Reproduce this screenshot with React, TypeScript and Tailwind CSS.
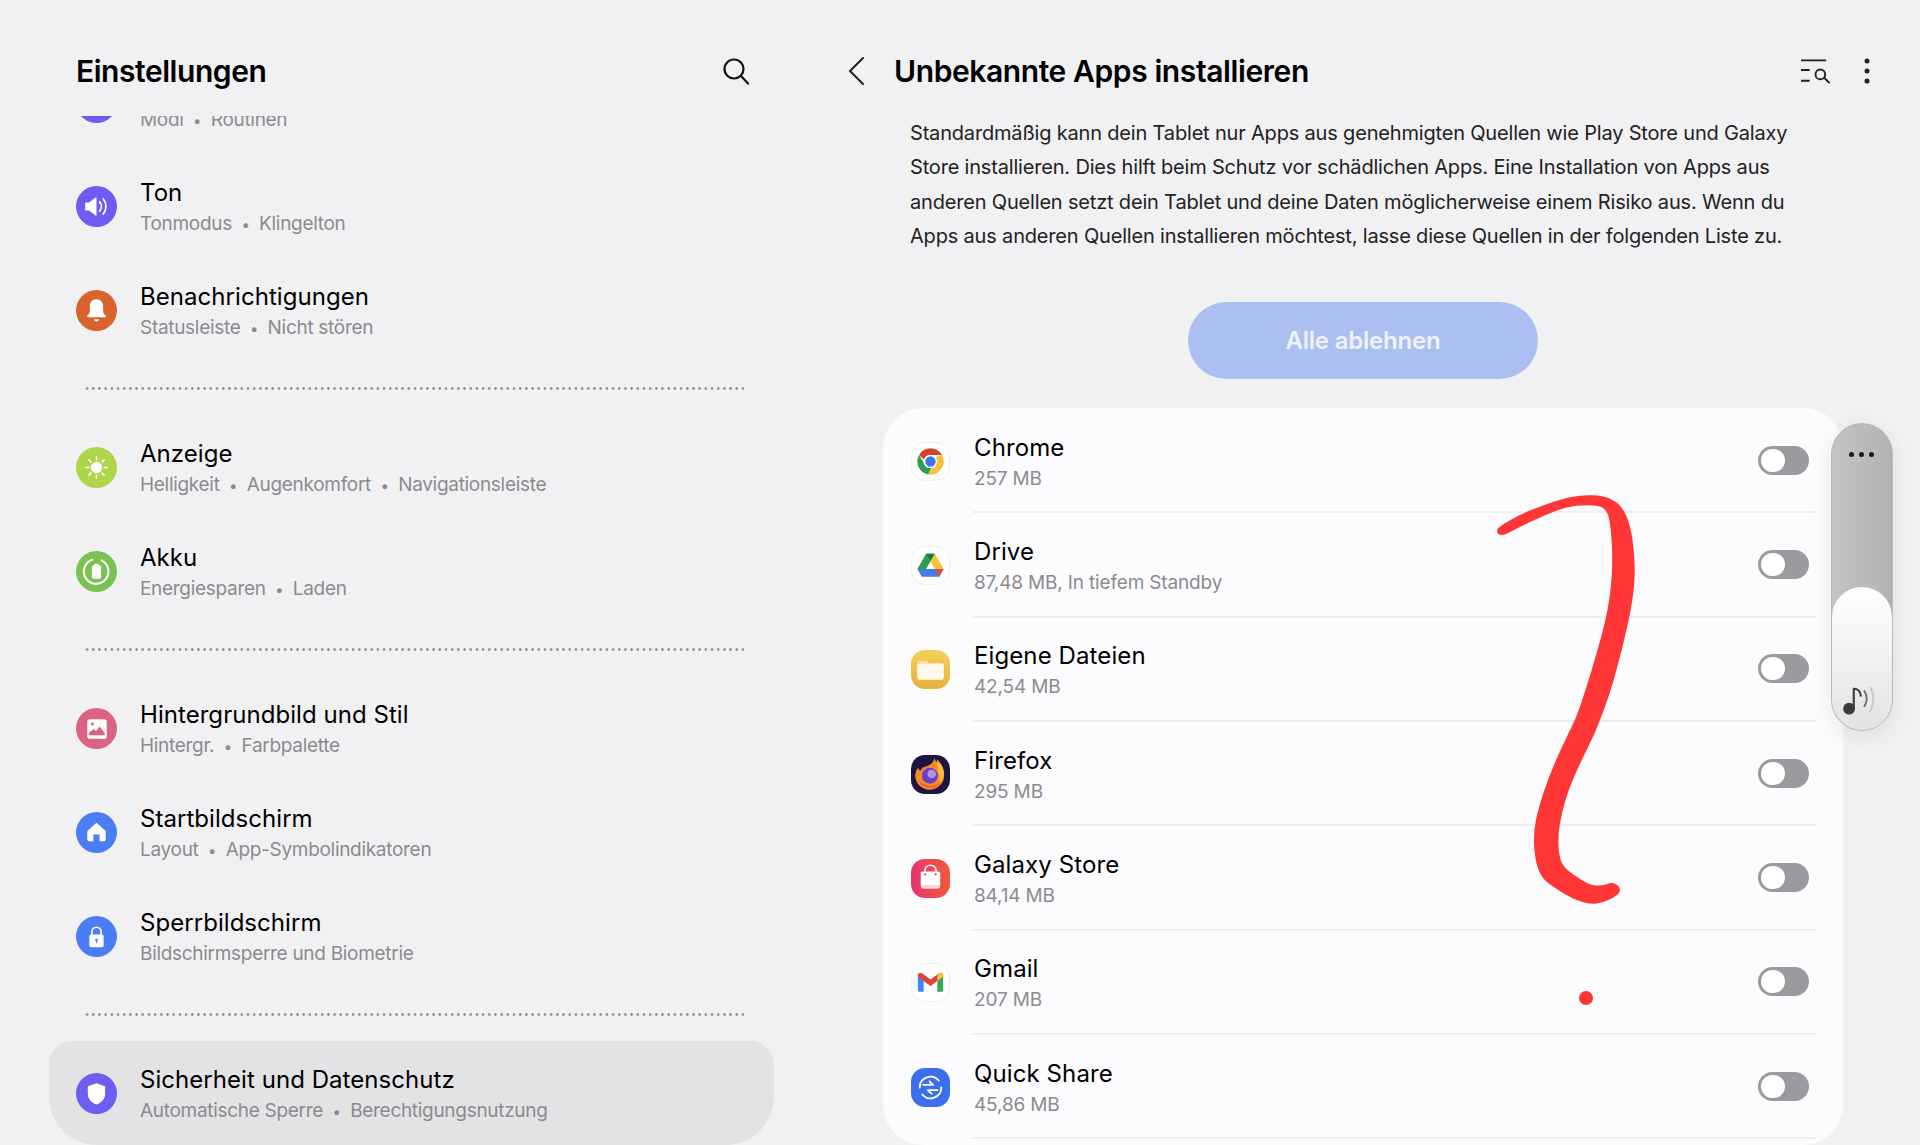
import React from 'react';

const font = { fontFamily: 'Inter, "Noto Sans", sans-serif' };

const scribblePoints: [number, number][] = [
  [50, 153], [55, 143], [90, 120], [150, 90], [250, 55], [300, 47], [350, 45], [395, 55], [430, 85], [452, 140],
  [463, 220], [465, 290], [458, 360], [440, 450], [415, 550], [390, 640], [360, 720], [340, 770], [300, 850],
  [265, 930], [245, 1000], [235, 1060], [235, 1110], [245, 1155], [280, 1185], [330, 1215], [365, 1218], [395, 1207],
  [415, 1215], [422, 1232], [410, 1248], [370, 1268], [330, 1273], [280, 1258], [230, 1228], [185, 1195], [165, 1140],
  [160, 1060], [175, 985], [210, 880], [260, 770], [290, 710], [320, 620], [350, 520], [375, 430], [392, 340],
  [398, 240], [393, 150], [385, 100], [365, 78], [320, 75], [260, 80], [190, 107], [120, 140], [75, 165], [55, 165],
];

const smoothPath = (pts: [number, number][]) => {
  const mid = (a: [number, number], b: [number, number]) => `${(a[0] + b[0]) / 2} ${(a[1] + b[1]) / 2}`;
  let d = `M${mid(pts[pts.length - 1], pts[0])}`;
  pts.forEach((p, i) => {
    d += ` Q${p[0]} ${p[1]} ${mid(p, pts[(i + 1) % pts.length])}`;
  });
  return d + 'Z';
};

const SpeakerGlyph = () => (
  <svg viewBox="0 0 40 40" className="w-full h-full">
    <path d="M9.5 16.5h3.5l6.5-5v17l-6.5-5H9.5z" fill="#fff" stroke="#fff" strokeWidth="1" strokeLinejoin="round" />
    <path d="M23 15.5c2.2 2.6 2.2 6.4 0 9M26.5 12.5c3.6 4.4 3.6 10.6 0 15" fill="none" stroke="#fff" strokeWidth="1.7" strokeLinecap="round" />
  </svg>
);

const BellGlyph = () => (
  <svg viewBox="0 0 40 40" className="w-full h-full">
    <path d="M20 9c-4.4 0-6.5 3.4-6.5 7v4.5c0 2-1 3.2-2.5 4.500v1.500h18V25c-1.500-1.300-2.500-2.500-2.500-4.500V16c0-3.600-2.100-7-6.500-7z" fill="#fff" />
    <path d="M17.500 28.500h5c-.4 1.500-1.300 2.200-2.500 2.200s-2.100-.7-2.500-2.200z" fill="#fff" />
  </svg>
);

const SunGlyph = () => (
  <svg viewBox="0 0 40 40" className="w-full h-full">
    <circle cx="20" cy="20" r="5.500" fill="#fff" />
    <path d="M20 9.500v3M20 27.500v3M9.500 20h3M27.500 20h3M12.600 12.600l2 2M25.400 25.400l2 2M27.400 12.600l-2 2M14.600 25.400l-2 2" stroke="#fff" strokeWidth="1.500" strokeLinecap="round" />
  </svg>
);

const BatteryGlyph = () => (
  <svg viewBox="0 0 40 40" className="w-full h-full">
    <path d="M16 8.500A12 12 0 1 0 25 9.200" fill="none" stroke="#fff" strokeWidth="2" strokeLinecap="round" />
    <path d="M18 12.500h4v1.500h1c.8 0 1.500.7 1.500 1.500v10c0 .8-.7 1.500-1.500 1.500h-6c-.8 0-1.500-.7-1.500-1.500v-10c0-.8.7-1.500 1.500-1.500h1z" fill="#fff" />
  </svg>
);

const PictureGlyph = () => (
  <svg viewBox="0 0 40 40" className="w-full h-full">
    <rect x="11" y="11" width="19" height="19" rx="2.500" fill="#fff" />
    <circle cx="16" cy="15.500" r="1.500" fill="#dc6283" />
    <path d="M12.500 26.500v-2l4.500-4 2.500 2 3.500-4.500 5 6.500v2z" fill="#dc6283" />
  </svg>
);

const HomeGlyph = () => (
  <svg viewBox="0 0 40 40" className="w-full h-full">
    <path d="M20 10.500l-8.500 7.500c-.4.400-.5.800-.5 1.300v7.200c0 1.100.9 2 2 2h4v-6.500h6V28.500h4c1.100 0 2-.9 2-2v-7.200c0-.5-.1-.9-.5-1.300z" fill="#fff" />
  </svg>
);

const LockGlyph = () => (
  <svg viewBox="0 0 40 40" className="w-full h-full">
    <path d="M15.500 19v-3.500a4.500 4.500 0 0 1 9 0V19" fill="none" stroke="#fff" strokeWidth="1.600" />
    <rect x="13" y="18" width="14" height="12.500" rx="2" fill="#fff" />
    <circle cx="20" cy="23.500" r="1.300" fill="#4b7ef5" />
    <rect x="19.400" y="23.500" width="1.200" height="3" fill="#4b7ef5" />
  </svg>
);

const ShieldGlyph = () => (
  <svg viewBox="0 0 40 40" className="w-full h-full">
    <path d="M20 10.500l8 2.800v7c0 4.800-3 8-8 10-5-2-8-5.200-8-10v-7z" fill="#fff" stroke="#fff" strokeLinejoin="round" />
  </svg>
);

const ChromeIcon = () => (
  <svg viewBox="0 0 38 38" className="w-full h-full">
    <path d="M19 5.500a13.500 13.500 0 0 1 11.700 6.750H19a6.750 6.750 0 0 0-6.500 5L7.300 12.250A13.500 13.500 0 0 1 19 5.500z" fill="#d5412f" />
    <path d="M7.300 12.250l5.800 10.100a6.750 6.750 0 0 0 6.900 3.300l-3.300 6.700A13.500 13.500 0 0 1 7.300 12.250z" fill="#2f9e4f" />
    <path d="M30.700 12.250A13.500 13.500 0 0 1 19 32.500l-2.200-.2 5.800-10a6.750 6.750 0 0 0-.1-7.050z" fill="#f6c13d" />
    <circle cx="19" cy="19" r="6.800" fill="#fff" />
    <circle cx="19" cy="19" r="5.300" fill="#3b78e7" />
  </svg>
);

const DriveIcon = () => (
  <svg viewBox="0 0 38 38" className="w-full h-full">
    <path d="M14.500 7h9l-9 15.500H5.500z" fill="#2f9e4f" />
    <path d="M14.500 7l4.500 7.700L23.500 7z" fill="#1d7a3c" />
    <path d="M23.500 7l9 15.500h-9L19 14.700z" fill="#f6c13d" />
    <path d="M5.500 22.500h27l-4.500 8H10z" fill="#3f7ee8" />
    <path d="M32.500 22.500h-9l4.500 8z" fill="#d9503f" />
  </svg>
);

const FilesIcon = () => (
  <svg viewBox="0 0 38 38" className="w-full h-full">
    <path d="M6 13c0-1.500 1-2.500 2.500-2.500H15l2.500 2.500h12.500c1.300 0 2 1 2 2v2H6z" fill="#f8e39a" />
    <rect x="6" y="13.500" width="26" height="15.500" rx="3" fill="#fdf8ea" />
  </svg>
);

const FirefoxIcon = () => (
  <svg viewBox="3 3 32 32" className="w-full h-full">
    <path d="M22 5.500c1 3 3.500 4 5 6.500 1.500 1.500 2.500 2.500 3 5.500 1.500 7.500-4.500 14-11.500 14C11.500 31.500 6.500 26 6.500 20c0-3 1-5 2.500-6.500.2 1.300.8 2 1.800 2.500 1-2.500 3-3.500 5-3.800 3-1 6-3 6.200-6.700z" fill="#f58a2c" />
    <path d="M24 6.500c3 3 6 6 6 11.500 0 4-2 7-4.500 8 1.500-3 1.500-6.500-.5-9.500-.5-3.500 0-7 -1-10z" fill="#fbbd3a" />
    <circle cx="18.500" cy="20" r="6.500" fill="#6a3fc7" />
    <circle cx="20" cy="18.500" r="3.500" fill="#f4d9ef" opacity=".55" />
    <path d="M9 23c2 5 6 7 10 7 4.500 0 7.500-2 9-5-3 3-7 4-11 3-3-.5-6-2.500-8-5z" fill="#f25c3f" />
  </svg>
);

const StoreIcon = () => (
  <svg viewBox="0 0 38 38" className="w-full h-full">
    <path d="M13.500 12.500v-1a5.500 5.500 0 0 1 11 0v1" fill="none" stroke="#fff" strokeWidth="1.500" />
    <path d="M9.500 14c0-1 .7-1.800 1.800-1.800h15.400c1.100 0 1.800.8 1.800 1.800v12H9.500z" fill="#fff" />
    <path d="M9.500 25.500h19c0 2-1 3.500-3 3.500H12.500c-2 0-3-1.500-3-3.500z" fill="#fbd5cf" />
    <circle cx="14" cy="15" r="1" fill="#e8386f" />
    <circle cx="24" cy="15" r="1" fill="#e8386f" />
  </svg>
);

const GmailIcon = () => (
  <svg viewBox="0 0 38 38" className="w-full h-full">
    <path d="M6 12.500V27a1.500 1.500 0 0 0 1.500 1.500H12V17z" fill="#4285f4" />
    <path d="M32 12.500V27a1.500 1.500 0 0 1-1.500 1.500H26V17z" fill="#34a853" />
    <path d="M6 11.500c0-2.200 2.600-3.300 4.300-2L19 16l8.700-6.500c1.700-1.300 4.300-.2 4.300 2V13l-6 4.500-7 5.200-7-5.200L6 13z" fill="#d9453a" />
    <path d="M26 10.500l1.700-1c1.700-1.300 4.300-.2 4.300 2V13l-6 4.500z" fill="#f6c13d" />
  </svg>
);

const QuickShareIcon = () => (
  <svg viewBox="0 0 38 38" className="w-full h-full">
    <path d="M8.500 19a10.500 10.500 0 0 1 18.500-6.800M29.500 19a10.500 10.500 0 0 1-18.500 6.800" fill="none" stroke="#fff" strokeWidth="1.800" strokeLinecap="round" />
    <path d="M12 16.500h9.500M18 13l3.500 3.500M26 21.500h-9.500M20 25l-3.500-3.500" fill="none" stroke="#fff" strokeWidth="1.800" strokeLinecap="round" />
  </svg>
);

const settingsGroups = [
  [
    { title: 'Ton', sub: ['Tonmodus', 'Klingelton'], color: 'bg-[#6c5cf0]', glyph: <SpeakerGlyph /> },
    { title: 'Benachrichtigungen', sub: ['Statusleiste', 'Nicht stören'], color: 'bg-[#d8632c]', glyph: <BellGlyph /> },
  ],
  [
    { title: 'Anzeige', sub: ['Helligkeit', 'Augenkomfort', 'Navigationsleiste'], color: 'bg-[#aed64a]', glyph: <SunGlyph /> },
    { title: 'Akku', sub: ['Energiesparen', 'Laden'], color: 'bg-[#7ac252]', glyph: <BatteryGlyph /> },
  ],
  [
    { title: 'Hintergrundbild und Stil', sub: ['Hintergr.', 'Farbpalette'], color: 'bg-[#dc6283]', glyph: <PictureGlyph /> },
    { title: 'Startbildschirm', sub: ['Layout', 'App-Symbolindikatoren'], color: 'bg-[#4b7ef5]', glyph: <HomeGlyph /> },
    { title: 'Sperrbildschirm', sub: ['Bildschirmsperre und Biometrie'], color: 'bg-[#4b7ef5]', glyph: <LockGlyph /> },
  ],
];

const apps = [
  { name: 'Chrome', size: '257 MB', tile: 'bg-white border border-[#efeff2]', icon: <ChromeIcon /> },
  { name: 'Drive', size: '87,48 MB, In tiefem Standby', tile: 'bg-white border border-[#efeff2]', icon: <DriveIcon /> },
  { name: 'Eigene Dateien', size: '42,54 MB', tile: 'bg-gradient-to-b from-[#f5cf5a] to-[#e9b03c]', icon: <FilesIcon /> },
  { name: 'Firefox', size: '295 MB', tile: 'bg-[#1d1440]', icon: <FirefoxIcon /> },
  { name: 'Galaxy Store', size: '84,14 MB', tile: 'bg-gradient-to-r from-[#e6306f] to-[#f05a35]', icon: <StoreIcon /> },
  { name: 'Gmail', size: '207 MB', tile: 'bg-white border border-[#efeff2]', icon: <GmailIcon /> },
  { name: 'Quick Share', size: '45,86 MB', tile: 'bg-[#3a6ff0]', icon: <QuickShareIcon /> },
];

const Subline = ({ parts }: { parts: string[] }) => (
  <p className="mt-[1px] text-[19px] tracking-[-0.3px] leading-[30px] text-[#8b8b8f] whitespace-nowrap">
    {parts.map((part, i) => (
      <span key={part}>
        {i > 0 && <span className="mx-[9.5px] text-[15px]">•</span>}
        {part}
      </span>
    ))}
  </p>
);

const SettingsRow = ({ title, sub, color, glyph, active }: { title: string; sub: string[]; color: string; glyph: React.ReactNode; active?: boolean }) => (
  <div className={`ml-[49px] w-[725px] h-[104px] flex-shrink-0 pl-[27px] flex items-center gap-[23px] ${active ? 'bg-[#e3e3e6] rounded-t-[24px] rounded-b-[48px]' : ''}`}>
    <div className={`w-[41px] h-[41px] rounded-full flex-shrink-0 ${color}`}>{glyph}</div>
    <div className="pt-[5px]">
      <p className="text-[24px] tracking-[0.05px] leading-[30px] text-black whitespace-nowrap">{title}</p>
      <Subline parts={sub} />
    </div>
  </div>
);

const DottedLine = () => (
  <div className="h-[53px] flex-shrink-0 flex items-center pl-[84px]">
    <div className="w-[660px] h-[3px] bg-[radial-gradient(circle,#8e8e93_1.1px,transparent_1.5px)] bg-[length:6.2px_3px]" />
  </div>
);

const Toggle = () => (
  <div className="w-[51px] h-[29px] rounded-full bg-[#9a9a9f] p-[3px] flex-shrink-0">
    <div className="w-[24px] h-[23px] rounded-full bg-white" />
  </div>
);

const AppRow = ({ name, size, tile, icon }: { name: string; size: string; tile: string; icon: React.ReactNode }) => (
  <div className="h-[104.300px] flex-shrink-0 pl-[28px] flex items-center">
    <div className={`w-[39px] h-[39px] rounded-[14px] flex-shrink-0 overflow-hidden ${tile}`}>{icon}</div>
    <div className="ml-[23px] mr-[27px] flex-1 h-full border-b-2 border-[#eeeef1] flex items-center justify-between pl-[1px] pr-[7px]">
      <div className="pt-[5px]">
        <p className="text-[24px] tracking-[0.1px] leading-[32px] text-black">{name}</p>
        <p className="text-[19px] tracking-[-0.16px] leading-[30px] text-[#8b8b8f]">{size}</p>
      </div>
      <Toggle />
    </div>
  </div>
);

export default function App() {
  return (
    <div className="relative w-[1920px] h-[1145px] bg-[#f1f1f4] overflow-hidden flex" style={font}>
      {/* left settings list */}
      <div className="w-[800px] flex-shrink-0 flex flex-col">
        <div className="h-[116px] flex-shrink-0 flex items-center justify-between pl-[76px] pr-[50px] pt-[26px]">
          <h1 className="text-[30px] font-semibold tracking-[-0.45px] text-black">Einstellungen</h1>
          <svg width="28" height="28" viewBox="0 0 28 28" fill="none" stroke="#111" strokeWidth="2.200" strokeLinecap="round">
            <circle cx="12" cy="12" r="9.500" />
            <path d="M19 19l7 7.500" />
          </svg>
        </div>
        <div className="flex-1 overflow-hidden flex flex-col">
          <div className="-mt-[66px] flex flex-col">
            <SettingsRow title="Modi und Routinen" sub={['Modi', 'Routinen']} color="bg-[#6c5cf0]" glyph={null} />
            {settingsGroups.map((group, i) => (
              <React.Fragment key={i}>
                {i > 0 && <DottedLine />}
                {group.map(row => <SettingsRow key={row.title} {...row} />)}
              </React.Fragment>
            ))}
            <DottedLine />
            <SettingsRow active title="Sicherheit und Datenschutz" sub={['Automatische Sperre', 'Berechtigungsnutzung']} color="bg-[#6c5ef0]" glyph={<ShieldGlyph />} />
          </div>
        </div>
      </div>

      {/* right detail pane */}
      <div className="flex-1 flex flex-col">
        <div className="h-[116px] flex-shrink-0 flex items-center pl-[48px] pr-[50px] pt-[26px]">
          <svg width="16" height="28" viewBox="0 0 16 28" fill="none" stroke="#222" strokeWidth="2" strokeLinecap="round" strokeLinejoin="round">
            <path d="M15 1L2 14l13 13" />
          </svg>
          <h2 className="ml-[30px] flex-1 text-[30px] font-semibold tracking-[-0.4px] text-black">Unbekannte Apps installieren</h2>
          <svg width="31" height="26" viewBox="0 0 32 26" fill="none" stroke="#222" strokeWidth="2" className="mr-[33px]">
            <path d="M1 2h26M1 12h9M1 23h9" />
            <circle cx="21" cy="16.500" r="5" />
            <path d="M25 20l5 5" strokeLinecap="round" />
          </svg>
          <svg width="6" height="26" viewBox="0 0 6 26" fill="#222">
            <circle cx="3" cy="3" r="2.500" />
            <circle cx="3" cy="13" r="2.500" />
            <circle cx="3" cy="23" r="2.500" />
          </svg>
        </div>
        <p className="ml-[110px] w-[890px] text-[20px] tracking-[-0.18px] leading-[34.300px] text-[#222]">
          Standardmäßig kann dein Tablet nur Apps aus genehmigten Quellen wie Play Store und Galaxy Store installieren. Dies hilft beim Schutz vor schädlichen Apps. Eine Installation von Apps aus anderen Quellen setzt dein Tablet und deine Daten möglicherweise einem Risiko aus. Wenn du Apps aus anderen Quellen installieren möchtest, lasse diese Quellen in der folgenden Liste zu.
        </p>
        <div className="mt-[49px] ml-[83px] w-[960px] flex justify-center">
          <button className="w-[350px] h-[77px] rounded-full bg-[#abbff0] text-[24px] font-semibold tracking-[-0.2px] text-[#eef2fd]">Alle ablehnen</button>
        </div>
        <div className="mt-[29px] ml-[83px] w-[960px] h-[737px] flex-shrink-0 pt-[1px] bg-[#fcfcfe] rounded-[40px] overflow-hidden flex flex-col">
          {apps.map(app => <AppRow key={app.name} {...app} />)}
        </div>
      </div>

      {/* red pen annotation */}
      <svg viewBox="0 0 540 1320" className="absolute left-[1480px] top-[480px] w-[180px] h-[440px]">
        <path d={smoothPath(scribblePoints)} fill="#fe3636" />
      </svg>
      <div className="absolute left-[1579px] top-[991px] w-[14px] h-[14px] rounded-full bg-[#fe3636]" />

      {/* volume slider overlay */}
      <div className="absolute left-[1831px] top-[423px] w-[62px] h-[308px] rounded-full overflow-hidden border border-[#b9b9bc] bg-gradient-to-r from-[#c4c4c7] to-[#b3b3b6] shadow-[0_6px_24px_rgba(0,0,0,0.08)] flex flex-col justify-between">
        <div className="flex justify-center gap-[5px] pt-[28px] pr-[2px]">
          <span className="w-[5px] h-[5px] rounded-full bg-[#1a1a1a]" />
          <span className="w-[5px] h-[5px] rounded-full bg-[#1a1a1a]" />
          <span className="w-[5px] h-[5px] rounded-full bg-[#1a1a1a]" />
        </div>
        <div className="h-[143px] rounded-t-full bg-gradient-to-b from-white to-[#e3e3e5] flex items-end pl-[10px] pb-[14px]">
          <svg width="40" height="31" viewBox="0 0 34 26" fill="none">
            <circle cx="6" cy="20" r="5" fill="#3c3c3e" />
            <path d="M10 20V3c3 0 6 2 6 6" stroke="#3c3c3e" strokeWidth="1.800" strokeLinecap="round" />
            <path d="M19 5c2.500 4 2.500 9 0 13" stroke="#6a6a6c" strokeWidth="1.500" strokeLinecap="round" />
            <path d="M24 2c3.500 6 3.500 14 0 20" stroke="#c8c8ca" strokeWidth="1.500" strokeLinecap="round" />
          </svg>
        </div>
      </div>
    </div>
  );
}
